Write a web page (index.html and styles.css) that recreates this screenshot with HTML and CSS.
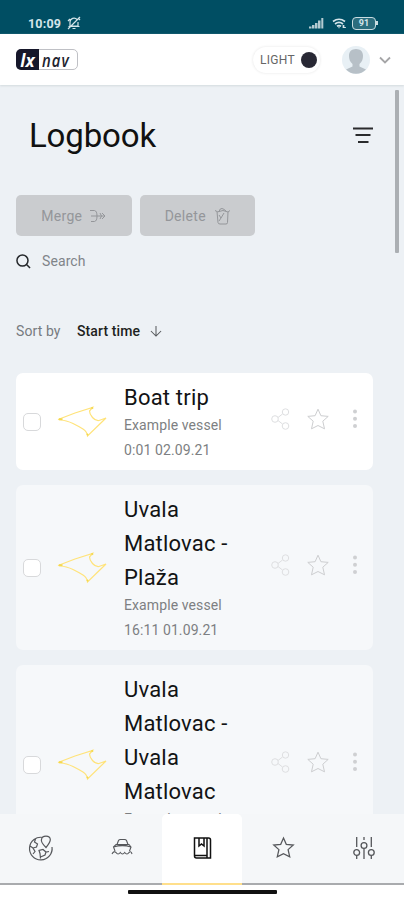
FILE: index.html
```html
<!DOCTYPE html>
<html lang="en">
<head>
<meta charset="utf-8">
<title>Logbook</title>
<link rel="stylesheet" href="styles.css">
</head>
<body>
<svg class="defs" width="0" height="0" aria-hidden="true">
  <symbol id="track" viewBox="0 0 50 32"><path d="M1 13.500 18 7 35.500 1.500 32.500 5Q32.500 8 35.500 11.500T42 14.500L49 12 30.500 30Q30 25.500 26 23T16 17.500T1 13.500"/><path class="ends" d="M2 13.300h3.500M34.500 2.500l1.500-1M30 29l1-1"/></symbol>
  <symbol id="share" viewBox="0 0 20 22"><circle cx="4" cy="11" r="3.300"/><circle cx="14.500" cy="4" r="3.200"/><circle cx="14.500" cy="18" r="3.300"/><path d="M7 9.500l4.500-3.500M7 12.500l4.500 3.500"/></symbol>
  <symbol id="star" viewBox="0 0 24 24"><path d="M12 2.200 14.900 8.700 22.200 9.400 16.800 14.200 18.500 21.800 12 18.500 5.500 21.800 7.200 14.200 1.800 9.400 9.100 8.700z"/></symbol>
  <symbol id="dots" viewBox="0 0 6 20"><circle cx="3" cy="2.500" r="2"/><circle cx="3" cy="9.700" r="2"/><circle cx="3" cy="17" r="2"/></symbol>
</svg>
<div class="screen">
  <div class="status">
    <span class="clock">10:09</span>
    <svg class="mute" viewBox="0 0 14 14"><path d="M3 10V6a4 4 0 0 1 7-2.500M11 6v4H4M1.500 10.500h11M5.500 12.500h3M1 13 13 1M1 5l2-2M11 2l2 2"/></svg>
    <svg class="signal" viewBox="0 0 15 12"><path d="M0 11.500V9.500h2.500v2zM3 11.500V8h2.500v3.500zM6 11.500V6h2.500v5.500zM9 11.500V3.500h2.500v8zM12.300 11.500V1h2v10.500z"/></svg>
    <svg class="wifi" viewBox="0 0 15 12"><path d="M1 4.500Q7 0 13 4.500M3 7Q7 3.800 11 7M5 9.300q2-1.500 4 0"/><path d="M6.500 10.500h1M11.500 8v3M13 10v1"/></svg>
    <span class="battery">91</span>
  </div>
  <header class="header">
    <div class="logo"><span class="logo-lx"><b>lx</b></span><span class="logo-nav"><b>nav</b></span></div>
    <div class="theme"><span>LIGHT</span><i class="knob"></i></div>
    <svg class="avatar" viewBox="0 0 28 28"><circle cx="14" cy="14" r="14" fill="#e8f0f5"/><path d="M14 3c-4.600 0-7.200 3-7 7 0 3 1 6 3.500 8v2.500L4 23.500A14 14 0 0 0 24 23.500L17.500 20.500V18C20 16 21 13 21 10c.2-4-2.400-7-7-7z" fill="#b7c0c7"/></svg>
    <svg class="chev" viewBox="0 0 12 8"><path d="M1 1.500 6 6.500 11 1.500"/></svg>
  </header>
  <main class="main">
    <div class="title-row">
      <h1>Logbook</h1>
      <svg class="filter" viewBox="0 0 20 17"><path d="M0 1.500h20M2.500 8h15M5 15h10.500"/></svg>
    </div>
    <div class="buttons">
      <button class="btn">Merge
        <svg class="merge" viewBox="0 0 16 14"><path d="M0 1.500h4.500Q7 2 7 7T4.500 12.500H1M1 7h14M10 4l1.500 3L10 10M12 4l3 3-3 3"/></svg>
      </button>
      <button class="btn">Delete
        <svg class="trash" viewBox="0 0 16 18"><path d="M1 3.500 3 4.500 4 15.500Q4.200 17 6 17h6q1.500 0 1.500-1.500L14 5l2-1.500M3 5 9 3.500 14 5M5 4.500Q6 1 8 1.500T12 4M5 8l2 3 3-5M7 11l-2 3"/></svg>
      </button>
    </div>
    <label class="search">
      <svg viewBox="0 0 16 16"><circle cx="6.900" cy="7" r="5.900"/><path d="M11 11l4 4"/></svg>
      <span>Search</span>
    </label>
    <div class="sort">
      <span class="by">Sort by</span><span class="key">Start time</span>
      <svg viewBox="0 0 13 12"><path d="M6.500.5v11M1 6l5.500 5.500L12 6"/></svg>
    </div>
    <div class="list">
      <article class="card active">
        <i class="check"></i>
        <svg class="track"><use href="#track"/></svg>
        <div class="info"><h2>Boat trip</h2><p>Example vessel</p><p>0:01 02.09.21</p></div>
        <div class="actions"><svg class="share"><use href="#share"/></svg><svg class="fav"><use href="#star"/></svg><svg class="dots"><use href="#dots"/></svg></div>
      </article>
      <article class="card">
        <i class="check"></i>
        <svg class="track"><use href="#track"/></svg>
        <div class="info"><h2>Uvala<br>Matlovac -<br>Plaža</h2><p>Example vessel</p><p>16:11 01.09.21</p></div>
        <div class="actions"><svg class="share"><use href="#share"/></svg><svg class="fav"><use href="#star"/></svg><svg class="dots"><use href="#dots"/></svg></div>
      </article>
      <article class="card">
        <i class="check"></i>
        <svg class="track"><use href="#track"/></svg>
        <div class="info"><h2>Uvala<br>Matlovac -<br>Uvala<br>Matlovac</h2><p>Example vessel</p></div>
        <div class="actions"><svg class="share"><use href="#share"/></svg><svg class="fav"><use href="#star"/></svg><svg class="dots"><use href="#dots"/></svg></div>
      </article>
    </div>
    <i class="scrollbar"></i>
  </main>
  <nav class="nav">
    <a class="tab"><svg class="globe" viewBox="0 0 26 28"><path d="M15 3.500A11.300 11.300 0 1 0 24 13M18 13.500Q12.500 8 13.500 5.500C14 1 22 1 22.300 5.500Q22.500 8 18 13.500zM7.500 5l-1 3 3 2-1 3-3.500 1 2 3.500-2 2.500M2 12l3 2M12.500 24.500l-.5-5-1-3 4-1 3 2.500 3-.5M18 18l-1 3-4.500 2"/></svg></a>
    <a class="tab"><svg class="boat" viewBox="0 0 22 18"><path d="M6 6.500 7.500 2.500Q8 1.500 9.500 1.500h4Q15 1.500 15.500 2.500L17 6.500M6 6.500h11M4 13 2.500 9 5 6.500 11.500 7.500 18 6.500 20 9l-1.500 4M2.500 9Q11.500 6.500 20 9M1 16q2-3.500 4-1.500 2 3 4.300 0 2.200 3 4.400 0 2.300 3 4.300 0 2-2 3 1.500"/></svg></a>
    <a class="tab current"><svg class="book" viewBox="0 0 19 22"><path d="M1.500 1h14q2 0 2 2v18h-14Q1.500 21 1.500 19zM14 1v20M1.500 18.500H14M6 1v8l2.500-2 2.500 2V1"/></svg></a>
    <a class="tab"><svg class="navstar"><use href="#star"/></svg></a>
    <a class="tab"><svg class="sliders" viewBox="0 0 22 22"><circle cx="3.700" cy="15.500" r="2.900"/><circle cx="11" cy="8.500" r="2.900"/><circle cx="18.300" cy="15.500" r="2.900"/><path d="M3.700 0v10M3.700 18.500V22M11 0v3M11 11.500V22M18.300 0v10M18.300 18.500V22"/></svg></a>
  </nav>
  <div class="gesture"><i></i></div>
</div>
</body>
</html>
```
FILE: styles.css
```css
* { box-sizing: border-box; }
body { margin: 0; font-family: Roboto, sans-serif; background: #fff; }
svg { display: block; flex: none; fill: none; stroke: currentColor; }
h1, h2, p { margin: 0; font-weight: 400; }
.defs { position: absolute; }
.screen { width: 404px; height: 900px; display: flex; flex-direction: column; overflow: hidden; }

.status { height: 34px; flex: none; background: #004e63; color: #d5e5ea; display: flex; align-items: center; padding: 12px 28px 0 28px; }
.clock { font-size: 12.5px; font-weight: 700; letter-spacing: .2px; width: 39px; }
.mute { width: 14px; height: 14px; stroke-width: 1.2; }
.signal { width: 15px; height: 12px; margin-left: auto; fill: #b4cbd2; stroke: none; }
.wifi { width: 15px; height: 12px; margin-left: 8px; stroke-width: 1.7; }
.battery { position: relative; width: 24px; height: 13px; margin-left: 5px; border: 1.5px solid #c9dce1; border-radius: 4px; font-size: 9px; line-height: 11px; font-weight: 700; text-align: center; background: #2b6d7e; }
.battery::after { content: ""; position: absolute; right: -3px; top: 3px; width: 2px; height: 4px; background: #c9dce1; }

.header { height: 51px; flex: none; background: #fff; display: flex; align-items: center; padding: 0 13px 0 16px; box-shadow: 0 1px 2px #d3dadd; z-index: 1; }
.logo { display: flex; align-items: center; height: 21px; width: 62px; border: 1px solid #bfc0c5; border-radius: 5px; font-family: "Open Sans", sans-serif; font-style: italic; line-height: 24px; }
.logo-lx { display: flex; align-items: center; justify-content: center; width: 23px; height: 21px; margin: 0 0 0 -1px; flex: none; background: #16172a; border-radius: 5px 0 0 5px; color: #fff; font-size: 18px; }
.logo-lx b { font-weight: 700; transform: scaleX(.95); }
.logo-nav { display: flex; align-items: center; flex: 1; font-size: 18px; color: #22232f; padding-left: 3px; }
.logo-nav b { font-weight: 600; letter-spacing: 1.4px; transform: scaleX(.82); transform-origin: left; }
.theme { margin-left: auto; width: 67px; height: 26px; border-radius: 13px; box-shadow: 0 0 3px #e4e4e4; display: flex; align-items: center; justify-content: space-between; padding: 0 3px 0 7px; font-size: 12px; letter-spacing: .3px; color: #666; }
.knob { width: 16px; height: 16px; border-radius: 50%; background: #282834; }
.avatar { width: 28px; height: 28px; margin-left: 22px; stroke: none; }
.chev { width: 12px; height: 8px; margin-left: 9px; color: #a5a5a7; stroke-width: 1.8; }

.main { position: relative; flex: none; height: 729px; background: #edf1f5; padding: 0 31px 0 16px; overflow: hidden; }
.title-row { display: flex; align-items: center; justify-content: space-between; height: 100px; padding-left: 13px; }
h1 { font-size: 33px; letter-spacing: -.15px; color: #111; }
.filter { width: 20px; height: 17px; color: #2a2b2d; stroke-width: 2.2; }
.buttons { display: flex; gap: 8px; margin-top: 10px; }
.btn { width: 115.500px; height: 41px; border: 0; border-radius: 5px; background: #cacccf; color: #94969a; font: 14px Roboto, sans-serif; letter-spacing: .3px; display: flex; align-items: center; justify-content: center; gap: 8px; padding: 0; }
.merge { width: 16px; height: 14px; }
.trash { width: 16px; height: 18px; }
.search { display: flex; align-items: center; gap: 11px; height: 20px; margin-top: 15px; font-size: 14px; letter-spacing: .1px; color: #808489; }
.search svg { width: 15px; height: 15px; color: #25282b; stroke-width: 1.6; }
.sort { display: flex; align-items: center; height: 20px; margin-top: 50px; font-size: 14px; letter-spacing: .1px; color: #777b80; }
.by { width: 61px; }
.key { font-weight: 500; color: #1d1f21; width: 73px; }
.sort svg { width: 12px; height: 12px; color: #55585b; stroke-width: 1.1; }

.list { display: flex; flex-direction: column; gap: 15px; margin-top: 32px; }
.card { display: flex; align-items: center; border-radius: 7px; background: #f6f8fa; padding: 8px 15px 7px 7px; }
.card.active { background: #fff; }
.card:last-child { height: 199px; }
.card:last-child .info { align-self: flex-start; }
.check { flex: none; width: 18px; height: 18px; border: 1.5px solid #d8d9db; border-radius: 5px; background: #fff; }
.track { width: 50px; height: 32px; margin: 0 17px 0 16px; color: #ffe37a; stroke-width: 1.2; }
.ends { stroke: #f3d850; stroke-width: 2; }
.info { flex: 1; }
h2 { font-size: 22px; line-height: 34px; margin-bottom: -2px; color: #121314; letter-spacing: .2px; }
.info p { font-size: 14px; line-height: 25px; color: #7d7f82; letter-spacing: .1px; }
.actions { display: flex; align-items: center; margin-bottom: 6px; color: #cdced0; }
.share { width: 20px; height: 22px; color: #dedfe1; margin-right: 15px; }
.fav { width: 24px; height: 24px; margin-right: 22px; }
.dots { width: 6px; height: 20px; fill: #cfd0d2; stroke: none; }
.scrollbar { position: absolute; right: 5px; top: 5px; width: 4px; height: 163px; background: #abafb3; border-radius: 1px; }

.nav { display: flex; height: 71px; flex: none; background: #f5f7f9; }
.tab { flex: 1; display: flex; align-items: center; justify-content: center; border-bottom: 2px solid #a9abae; padding: 0 0 2px 1px; color: #55575b; }
.tab.current { background: #fff; border-bottom-color: #ffdf8b; border-radius: 5px 5px 0 0; color: #111; }
.globe { width: 26px; height: 28px; stroke-width: 1.2; }
.boat { width: 22px; height: 18px; stroke-width: 1.1; margin-top: -1px; }
.book { width: 19px; height: 22px; stroke-width: 1.5; }
.navstar { width: 23px; height: 23px; stroke-width: 1.3; }
.sliders { width: 22px; height: 22px; stroke-width: 1.3; }
.gesture { flex: 1; display: flex; justify-content: center; align-items: flex-start; padding-top: 5px; }
.gesture i { width: 149px; height: 4px; border-radius: 1px; background: #111; }
```
